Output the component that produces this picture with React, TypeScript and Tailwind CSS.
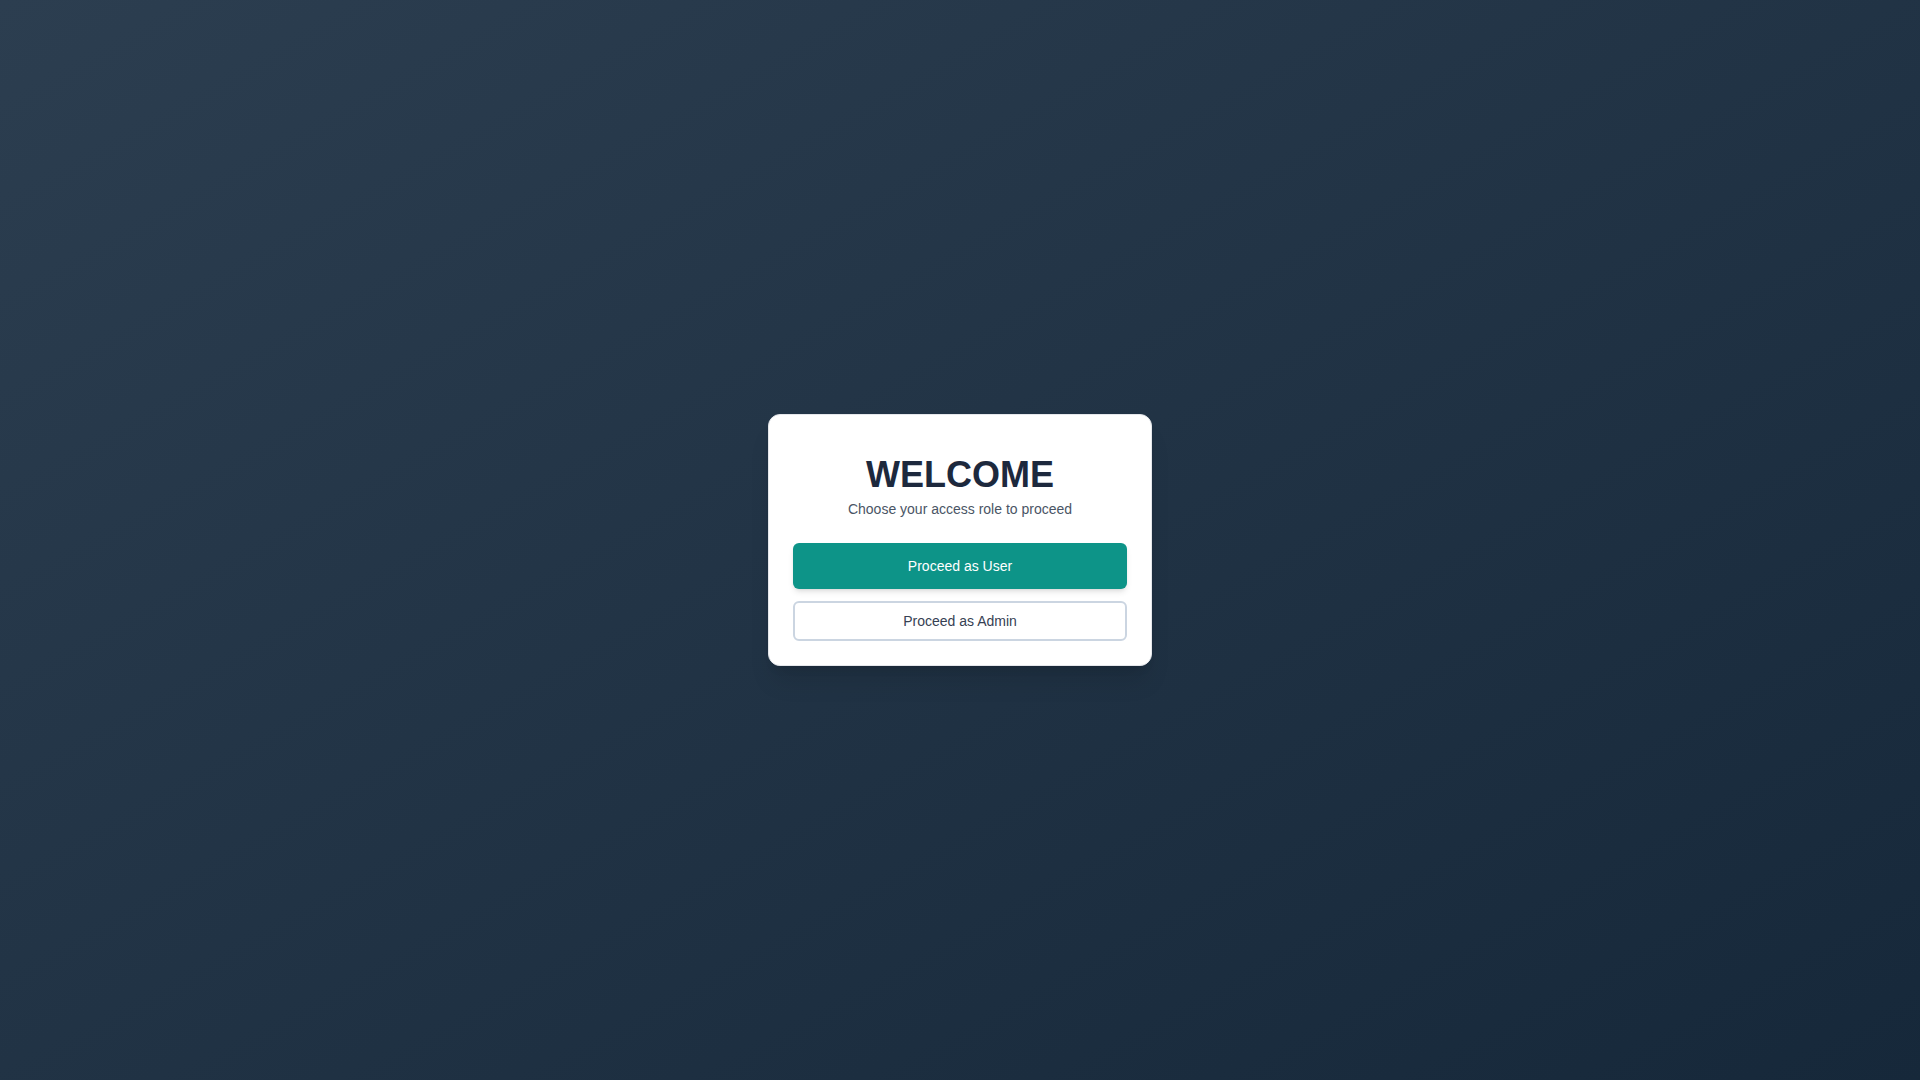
import React from 'react';

function App() {
  const handleSelect = (role: 'user' | 'admin') => {
    console.log('proceed as', role);
  };

  return (
    <div className="min-h-screen w-full flex items-center justify-center bg-gradient-to-br from-[#2c3e50] to-[#16283a] font-['Liberation_Sans',Arial,sans-serif]">
      {/* Role selection card */}
      <div className="w-96 bg-white rounded-xl border border-gray-200 shadow-xl px-6 pt-10 pb-6 text-center">
        <h1 className="text-4xl font-bold text-slate-800">WELCOME</h1>
        <p className="mt-1 text-sm text-gray-600">Choose your access role to proceed</p>

        <div className="mt-6 flex flex-col gap-3">
          <button
            onClick={() => handleSelect('user')}
            className="w-full py-[13px] text-sm text-white bg-[#0d9488] rounded-md shadow-md hover:bg-[#0f766e]"
          >
            Proceed as User
          </button>
          <button
            onClick={() => handleSelect('admin')}
            className="w-full py-2 text-sm text-gray-700 bg-white border-2 border-[#cbd5e1] rounded-md hover:bg-slate-50"
          >
            Proceed as Admin
          </button>
        </div>
      </div>
    </div>
  );
}

export default App;
